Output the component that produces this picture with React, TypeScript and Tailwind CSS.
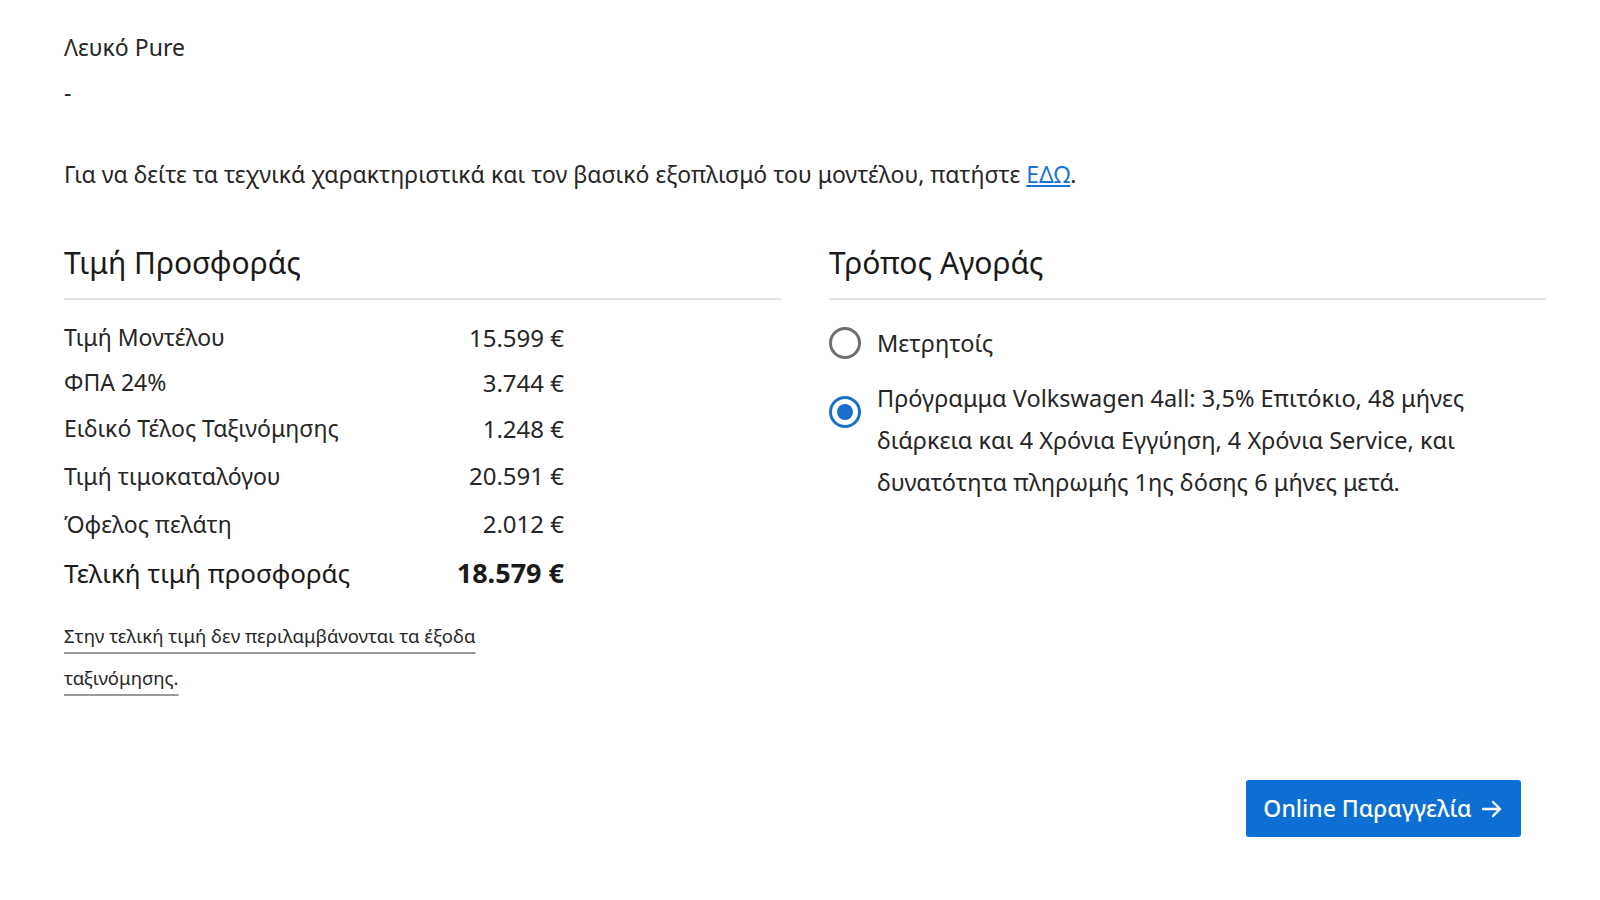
import { useState } from 'react'

const priceRows = [
  { label: 'Τιμή Μοντέλου', value: '15.599 €', height: 'h-[45px]' },
  { label: 'ΦΠΑ 24%', value: '3.744 €', height: 'h-[45px]' },
  { label: 'Ειδικό Τέλος Ταξινόμησης', value: '1.248 €', height: 'h-[47px]' },
  { label: 'Τιμή τιμοκαταλόγου', value: '20.591 €', height: 'h-[48px]' },
  { label: 'Όφελος πελάτη', value: '2.012 €', height: 'h-[48px]' },
]

const purchaseOptions = [
  { id: 'cash', label: 'Μετρητοίς' },
  {
    id: '4all',
    label:
      'Πρόγραμμα Volkswagen 4all: 3,5% Επιτόκιο, 48 μήνες διάρκεια και 4 Χρόνια Εγγύηση, 4 Χρόνια Service, και δυνατότητα πληρωμής 1ης δόσης 6 μήνες μετά.',
  },
]

const App = () => {
  const [method, setMethod] = useState('4all')

  return (
    <div className="min-h-screen bg-white font-['Noto_Sans',sans-serif] text-[#262626]">
      <main className="pl-[64px] pr-[54px] pt-[31px]">
        <p className="text-[23px] leading-[32px]">Λευκό Pure</p>
        <p className="mt-[13px] text-[23px] leading-[32px]">-</p>

        <p className="mt-[50px] text-[23px] leading-[32px]">
          Για να δείτε τα τεχνικά χαρακτηριστικά και τον βασικό εξοπλισμό του μοντέλου, πατήστε{' '}
          <a className="text-[#1a73d4] underline underline-offset-2" href="#">
            ΕΔΩ
          </a>
          .
        </p>

        <div className="mt-[53px] grid grid-cols-2 gap-[48px]">
          <section>
            <h2 className="border-b-2 border-[#e4e4e4] pb-[15px] text-[30px] leading-[40px] text-[#1a1a1a]">
              Τιμή Προσφοράς
            </h2>

            <div className="mt-[15px] w-[500px]">
              {priceRows.map((row) => (
                <div key={row.label} className={`flex items-center justify-between text-[23px] ${row.height}`}>
                  <span>{row.label}</span>
                  <span className="text-[24px]">{row.value}</span>
                </div>
              ))}
              <div className="flex h-[50px] items-center justify-between text-[26px] text-[#1a1a1a]">
                <span>Τελική τιμή προσφοράς</span>
                <span className="text-[27px] font-bold">18.579 €</span>
              </div>
            </div>

            <p className="mt-[17px] w-[430px] text-[18.5px] leading-[42px]">
              <span className="underline decoration-[#9a9a9a] decoration-2 underline-offset-[9px]">
                Στην τελική τιμή δεν περιλαμβάνονται τα έξοδα ταξινόμησης.
              </span>
            </p>
          </section>

          <section>
            <h2 className="border-b-2 border-[#e4e4e4] pb-[15px] text-[30px] leading-[40px] text-[#1a1a1a]">
              Τρόπος Αγοράς
            </h2>

            <div className="mt-[27px] flex flex-col gap-[18px]">
              {purchaseOptions.map((option) => {
                const checked = method === option.id
                return (
                  <label key={option.id} className="flex cursor-pointer items-start gap-[16px]">
                    <input
                      type="radio"
                      name="method"
                      className="sr-only"
                      checked={checked}
                      onChange={() => setMethod(option.id)}
                    />
                    <span
                      className={
                        checked
                          ? 'mt-[14px] flex h-[32px] w-[32px] shrink-0 items-center justify-center rounded-full border-[3px] border-[#1a6fc9]'
                          : 'flex h-[32px] w-[32px] shrink-0 items-center justify-center rounded-full border-[3px] border-[#6e6e6e]'
                      }
                    >
                      {checked ? <span className="h-[16px] w-[16px] rounded-full bg-[#1a6fc9]" /> : null}
                    </span>
                    <span className="-mt-[5px] max-w-[610px] text-[23.5px] leading-[42px]">{option.label}</span>
                  </label>
                )
              })}
            </div>
          </section>
        </div>

        <div className="mt-[81px] flex justify-end pr-[25px]">
          <button className="flex h-[57px] w-[275px] items-center justify-center gap-[8px] rounded-[3px] bg-[#0b6fd3] text-[23px] font-medium text-white">
            Online Παραγγελία
            <svg width="24" height="24" viewBox="0 0 24 24" fill="none" stroke="currentColor" strokeWidth="2.4" strokeLinecap="round" strokeLinejoin="round">
              <path d="M3 12h17" />
              <path d="M13 5l7 7-7 7" />
            </svg>
          </button>
        </div>
      </main>
    </div>
  )
}

export default App
